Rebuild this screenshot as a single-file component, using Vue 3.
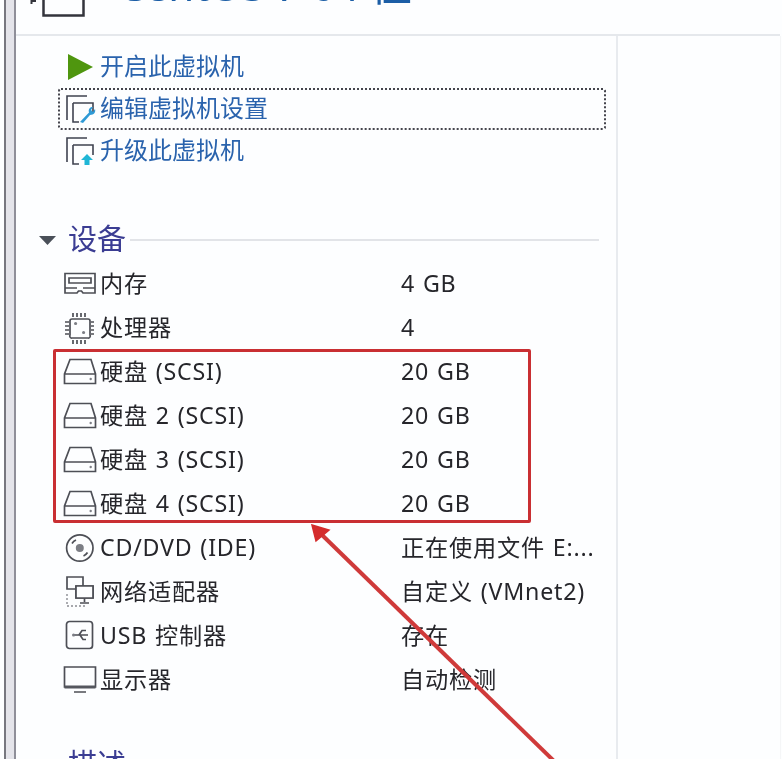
<script setup>
const actions = [
  { label: '开启此虚拟机', icon: 'play' },
  { label: '编辑虚拟机设置', icon: 'edit', focused: true },
  { label: '升级此虚拟机', icon: 'upgrade' },
]

const icons = {
  mem: { line: 'M3 7.5H33V27H21L19.5 25H16.5L15 27H3ZM7 12H29V17H7ZM3 22H15M21 22H33' },
  cpu: {
    line: 'M10 9H26A2 2 0 0 1 28 11V25A2 2 0 0 1 26 28H10A2 2 0 0 1 8 25V11A2 2 0 0 1 10 9ZM11 3V7M15 3V7M19 3V7M23 3V7M11 30V34M15 30V34M19 30V34M23 30V34M3 12H7M3 16H7M3 20H7M3 24H7M29 12H32M29 16H32M29 20H32M29 24H32',
    fill: 'M12 13.5a1.6 1.6 0 1 0 3.2 0a1.6 1.6 0 1 0 -3.2 0ZM20 22.5a1.6 1.6 0 1 0 3.2 0a1.6 1.6 0 1 0 -3.2 0Z',
  },
  disk: {
    line: 'M8 5.5H29L33.5 20V29.5H2.5V20ZM2.5 20H33.5',
    fill: 'M27.5 25a1.2 1.2 0 1 0 2.4 0a1.2 1.2 0 1 0 -2.4 0Z',
  },
  cd: {
    line: 'M31 18A13.2 13.2 0 1 1 4.6 18A13.2 13.2 0 1 1 31 18ZM10 13.5A9 9 0 0 1 14 10M25.5 22.5A9 9 0 0 1 21.5 26',
    fill: 'M13.8 18a4 4 0 1 0 8 0a4 4 0 1 0 -8 0Z',
  },
  net: {
    line: 'M5 3H21V15H5ZM14 12H31V24H14ZM22.5 24V28M18 29H27',
    cover: 'M14 12H31V24H14Z',
    dots: 'M5 20V32H24',
  },
  usb: {
    line: 'M7.5 3.5H27.5A3 3 0 0 1 30.5 6.5V27.5A3 3 0 0 1 27.5 30.5H7.5A3 3 0 0 1 4.5 27.5V6.5A3 3 0 0 1 7.5 3.5ZM12 17H26M17 17L20 12.5H24M18 17L21 21.5H24',
    fill: 'M10 17a1.6 1.6 0 1 0 3.2 0a1.6 1.6 0 1 0 -3.2 0Z',
  },
  screen: {
    line: 'M2.5 5H33.5V25H2.5ZM12 30H24',
    heavy: 'M2.5 25H33.5',
  },
}

const devices = [
  { icon: 'mem', name: '内存', value: '4 GB' },
  { icon: 'cpu', name: '处理器', value: '4' },
  { icon: 'disk', name: '硬盘 (SCSI)', value: '20 GB' },
  { icon: 'disk', name: '硬盘 2 (SCSI)', value: '20 GB' },
  { icon: 'disk', name: '硬盘 3 (SCSI)', value: '20 GB' },
  { icon: 'disk', name: '硬盘 4 (SCSI)', value: '20 GB' },
  { icon: 'cd', name: 'CD/DVD (IDE)', value: '正在使用文件 E:...' },
  { icon: 'net', name: '网络适配器', value: '自定义 (VMnet2)' },
  { icon: 'usb', name: 'USB 控制器', value: '存在' },
  { icon: 'screen', name: '显示器', value: '自动检测' },
]
</script>

<template>
  <div class="page">
    <div class="frame"></div>
    <div class="content">
      <header class="header">
        <div class="hero">
          <svg class="hero-icon" width="72" height="47" viewBox="0 0 72 47">
            <path d="M15.5 34V31H20" class="hero-mark" />
            <path d="M27.5 0V45.5H67.5V0" class="hero-box" />
          </svg>
          <h1 class="title">CentOS 7 64 位</h1>
        </div>
      </header>
      <div class="body">
        <main class="main">
          <ul class="actions">
            <li v-for="a in actions" :key="a.label" class="action" :class="{ focused: a.focused }">
              <svg class="icon" width="36" height="36" viewBox="0 0 36 36">
                <path v-if="a.icon === 'play'" d="M6 5L31 18L6 31Z" class="play" />
                <template v-else>
                  <path d="M25 5H5V29M11 12H31V22M11 12V31H17" class="vm" />
                  <path v-if="a.icon === 'edit'" d="M18 31L27 21.5C26 18 28 16 31 16L29 19L31 21L33 18C34 21 32 24 28 24L21 32Z" class="tool" />
                  <path v-else d="M25 21L31 27H27.5V32H22.5V27H19Z" class="up" />
                </template>
              </svg>
              <span class="action-label">{{ a.label }}</span>
            </li>
          </ul>

          <h2 class="section devices-head">
            <svg class="caret" width="17" height="9" viewBox="0 0 17 9"><path d="M0 0H17L8.5 9Z" /></svg>
            <span class="section-label">设备</span>
            <i class="rule"></i>
          </h2>

          <ul class="devices">
            <li v-for="d in devices" :key="d.name" class="device">
              <svg class="icon" width="36" height="36" viewBox="0 0 36 36">
                <path :d="icons[d.icon].line" class="stroke" />
                <path v-if="icons[d.icon].cover" :d="icons[d.icon].cover" class="cover" />
                <path v-if="icons[d.icon].fill" :d="icons[d.icon].fill" class="dot" />
                <path v-if="icons[d.icon].dots" :d="icons[d.icon].dots" class="dots" />
                <path v-if="icons[d.icon].heavy" :d="icons[d.icon].heavy" class="heavy" />
              </svg>
              <span class="name">{{ d.name }}</span>
              <span class="value">{{ d.value }}</span>
            </li>
          </ul>

          <h2 class="section desc-head"><span class="section-label">描述</span></h2>
        </main>
        <aside class="side"></aside>
      </div>
    </div>

    <div class="highlight"></div>
    <svg class="arrow" width="782" height="759" viewBox="0 0 782 759">
      <path d="M320 533L555 762" class="arrow-line" />
      <path d="M312 525L329 530L316 541Z" class="arrow-head" />
    </svg>
  </div>
</template>

<style scoped>
.page {
  position: relative;
  display: flex;
  width: 782px;
  height: 759px;
  overflow: hidden;
  background: #fdfeff;
  font-family: "Noto Sans", "Noto Sans CJK SC", sans-serif;
  color: #26262b;
  filter: blur(0.45px);
}

.frame {
  flex: none;
  box-sizing: border-box;
  width: 12px;
  margin-left: 4px;
  background: #e4e4ea;
  border-left: 2px solid #77777f;
  border-right: 2px solid #8f8f99;
}

.content {
  flex: 1;
  display: flex;
  flex-direction: column;
  min-width: 0;
}

.header {
  flex: none;
  height: 34px;
  margin-right: 2px;
  overflow: hidden;
  border-bottom: 2px solid #e5e8ec;
}

.hero {
  display: flex;
  align-items: flex-start;
  margin-top: -30px;
}

.hero-icon {
  flex: none;
}

.hero-mark {
  fill: none;
  stroke: #33343c;
  stroke-width: 2;
}

.hero-box {
  fill: none;
  stroke: #33343c;
  stroke-width: 2.5;
}

.title {
  margin: 0 0 0 30px;
  font-size: 42px;
  line-height: 29px;
  font-weight: 400;
  color: #1c5ea6;
  white-space: nowrap;
}

.body {
  flex: 1;
  display: flex;
  min-height: 0;
}

.main {
  flex: none;
  box-sizing: border-box;
  width: 602px;
  border-right: 2px solid #e8ebef;
}

.side {
  flex: 1;
  margin-right: 1px;
  border-right: 1px solid #f5f6f7;
}

.actions {
  list-style: none;
  margin: 10px 10px 0 42px;
  padding: 0;
}

.action {
  box-sizing: border-box;
  display: flex;
  align-items: center;
  gap: 2px;
  height: 42px;
  padding-left: 4px;
  font-size: 24px;
  color: #2a63ad;
}

.action.focused {
  padding-left: 2px;
  border: 2px dotted #45454d;
  border-radius: 3px;
}

.action-label {
  line-height: 36px;
  padding-bottom: 2px;
}

.icon {
  flex: none;
  display: block;
}

.play {
  fill: #4f960f;
}

.vm {
  fill: none;
  stroke: #3f4350;
  stroke-width: 1.6;
}

.tool {
  fill: #2e9ad6;
}

.up {
  fill: #1fb6d6;
}

.section {
  display: flex;
  align-items: center;
  height: 30px;
  margin: 0;
  font-size: 29px;
  line-height: 30px;
  font-weight: 400;
  color: #3b3d93;
}

.section-label {
  padding-bottom: 3px;
}

.devices-head {
  margin: 53px 17px 7px 23px;
}

.caret {
  flex: none;
  margin-right: 12px;
  fill: #4a5059;
}

.rule {
  flex: 1;
  margin-left: 4px;
  height: 2px;
  background: #e2e4e8;
}

.devices {
  list-style: none;
  margin: 0 0 0 46px;
  padding: 0;
}

.device {
  display: flex;
  align-items: center;
  height: 44px;
  font-size: 23.2px;
  letter-spacing: 0.8px;
  word-spacing: 1px;
}

.name {
  flex: none;
  width: 301px;
  margin-left: 2px;
  line-height: 36px;
  padding-bottom: 3px;
  white-space: nowrap;
}

.value {
  white-space: nowrap;
  line-height: 36px;
  padding-bottom: 3px;
}

.stroke {
  fill: none;
  stroke: #4d4f56;
  stroke-width: 1.7;
}

.cover {
  fill: #fdfeff;
  stroke: #4d4f56;
  stroke-width: 1.7;
}

.dot {
  fill: #7c7e85;
}

.dots {
  fill: none;
  stroke: #8a8c93;
  stroke-width: 1.4;
  stroke-dasharray: 2 2;
}

.heavy {
  fill: none;
  stroke: #55575e;
  stroke-width: 3;
}

.desc-head {
  margin: 48px 0 0 52px;
}

.highlight {
  position: absolute;
  left: 53px;
  top: 349px;
  width: 478px;
  height: 174px;
  box-sizing: border-box;
  border: 3.5px solid #c92f33;
  border-radius: 2px;
  pointer-events: none;
}

.arrow {
  position: absolute;
  left: 0;
  top: 0;
  pointer-events: none;
}

.arrow-line {
  fill: none;
  stroke: #cf3a3a;
  stroke-width: 4;
}

.arrow-head {
  fill: #d42c2c;
  stroke: #d42c2c;
  stroke-width: 1.5;
}
</style>
